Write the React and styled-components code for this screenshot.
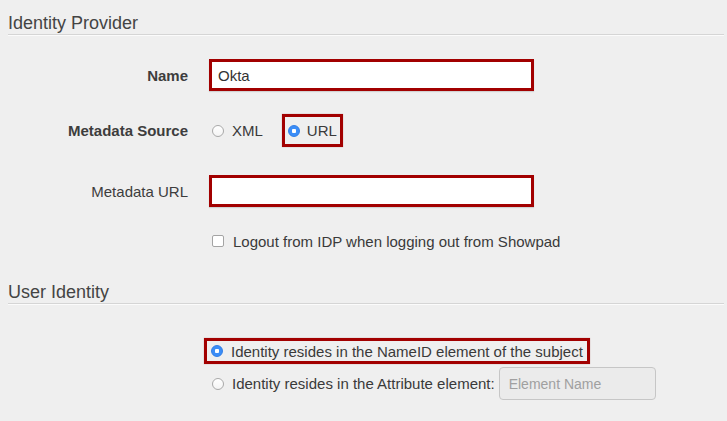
import React from 'react'
import styled, { createGlobalStyle } from 'styled-components'

const GlobalStyle = createGlobalStyle`
	html, body {
		margin: 0;
		padding: 0;
		background: #efefef;
	}
`

const Page = styled.div`
	padding: 0 3px 0 8px;
	font-family: "Liberation Sans", Arial, sans-serif;
	font-size: 15px;
	color: #3a3a3a;
`

const SectionTitle = styled.h2`
	margin: ${p => p.$gap || 0}px 0 0;
	padding: 13px 0 1px;
	font-size: 18px;
	line-height: 20px;
	font-weight: normal;
	color: #444;
	border-bottom: 1px solid #d5d5d5;
	box-shadow: 0 1px 0 #fbfbfb;
`

const Row = styled.div`
	display: flex;
	align-items: center;
	gap: 21px;
	margin-top: ${p => p.$gap}px;
	min-height: ${p => p.$h || 20}px;
`

const Label = styled.div`
	width: 180px;
	flex: none;
	text-align: right;
	font-weight: ${p => (p.$bold ? 'bold' : 'normal')};
	color: #3d3d3d;
`

const Controls = styled.div`
	display: flex;
	align-items: center;
	margin-left: ${p => p.$shift || 0}px;
`

const Highlight = styled.div`
	display: flex;
	align-items: center;
	height: ${p => p.$h}px;
	box-sizing: border-box;
	padding: 0 ${p => p.$pad}px;
	border: 3px solid #a20000;
	box-shadow: 0 0 1px rgba(120, 0, 0, 0.4);
`

const TextInput = styled.div`
	width: 325px;
	height: 32px;
	box-sizing: border-box;
	border: 3px solid #a20000;
	background: #fff;
	display: flex;
	align-items: center;
	padding-left: 6px;
	color: #333;
	box-shadow: 0 1px 1px rgba(0, 0, 0, 0.12);
`

const Radio = styled.span`
	width: 12px;
	height: 12px;
	box-sizing: border-box;
	border-radius: 50%;
	flex: none;
	margin-left: ${p => p.$ml || 0}px;
	${p =>
		p.$checked
			? `background: radial-gradient(circle, #fff 0 2px, #3b8df7 2.5px);
			   border: 1px solid #2f7de6;`
			: `background: linear-gradient(#ffffff, #f4f4f4);
			   border: 1px solid #a9a9a9;`}
`

const Checkbox = styled.span`
	width: 12px;
	height: 12px;
	box-sizing: border-box;
	border: 1px solid #a4a4a4;
	border-radius: 2px;
	background: #fff;
	flex: none;
	margin-left: 3px;
`

const OptionText = styled.span`
	margin-left: ${p => p.$ml || 8}px;
	white-space: nowrap;
`

const ElementInput = styled.div`
	width: 157px;
	height: 33px;
	box-sizing: border-box;
	margin-left: 4px;
	border: 1px solid #c6c6c6;
	border-radius: 4px;
	background: #ebebeb;
	color: #a0a0a0;
	font-size: 14px;
	display: flex;
	align-items: center;
	padding-left: 9px;
`

const App = () =>
	<Page>
		<GlobalStyle />
		<SectionTitle>Identity Provider</SectionTitle>

		<Row $gap={24} $h={32}>
			<Label $bold>Name</Label>
			<TextInput>Okta</TextInput>
		</Row>

		<Row $gap={23} $h={33}>
			<Label $bold>Metadata Source</Label>
			<Controls>
				<Radio $ml={3} />
				<OptionText>XML</OptionText>
				<Controls $shift={19}>
					<Highlight $h={33} $pad={3}>
						<Radio $checked />
						<OptionText $ml={7}>URL</OptionText>
					</Highlight>
				</Controls>
			</Controls>
		</Row>

		<Row $gap={28} $h={32}>
			<Label>Metadata URL</Label>
			<TextInput />
		</Row>

		<Row $gap={24} $h={20}>
			<Label />
			<Controls>
				<Checkbox />
				<OptionText $ml={9}>Logout from IDP when logging out from Showpad</OptionText>
			</Controls>
		</Row>

		<SectionTitle $gap={18}>User Identity</SectionTitle>

		<Row $gap={34} $h={26}>
			<Label />
			<Controls $shift={-5}>
				<Highlight $h={26} $pad={4}>
					<Radio $checked />
					<OptionText $ml={8}>Identity resides in the NameID element of the subject</OptionText>
				</Highlight>
			</Controls>
		</Row>

		<Row $gap={3} $h={33}>
			<Label />
			<Controls>
				<Radio $ml={3} />
				<OptionText $ml={8}>Identity resides in the Attribute element:</OptionText>
				<ElementInput>Element Name</ElementInput>
			</Controls>
		</Row>
	</Page>

export default App
